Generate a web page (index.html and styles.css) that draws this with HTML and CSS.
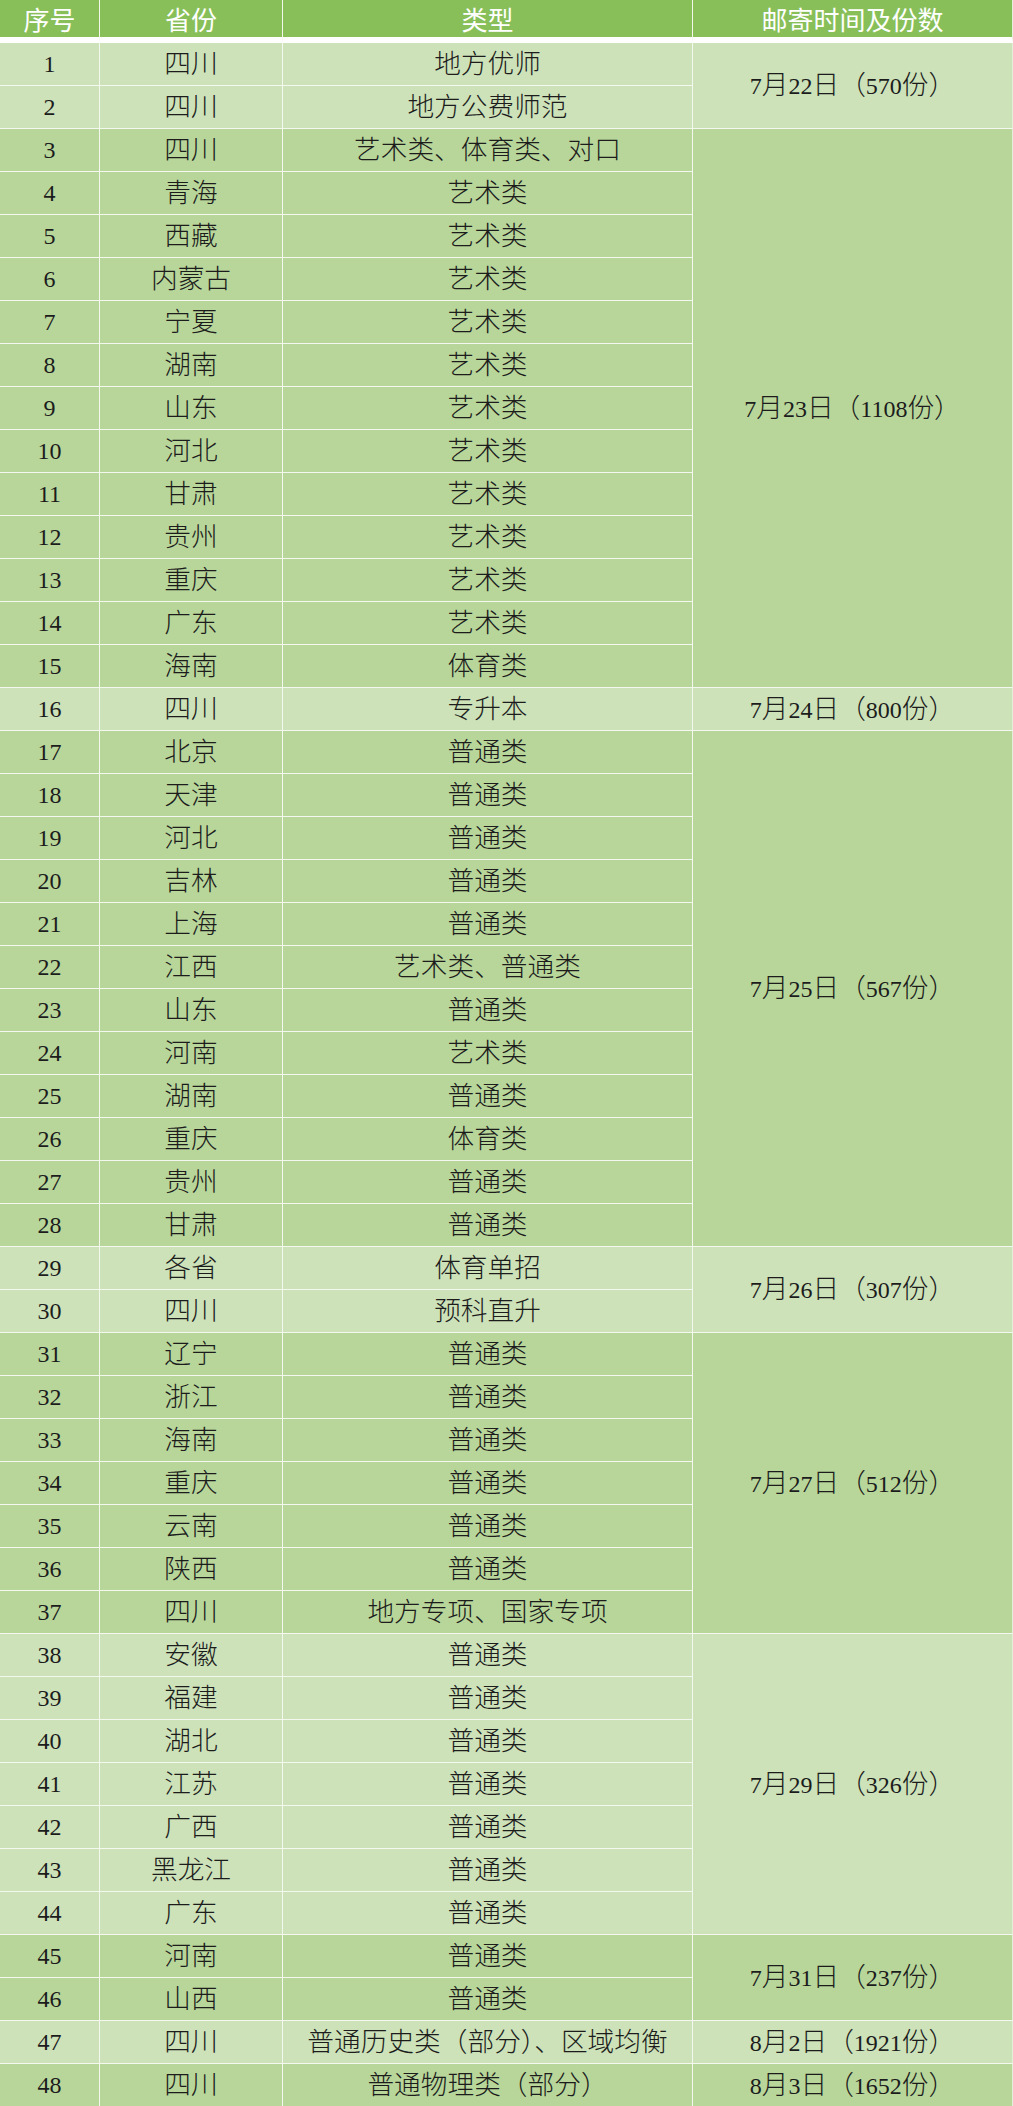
FILE: index.html
```html
<!DOCTYPE html>
<html lang="zh-CN">
<head>
<meta charset="utf-8">
<title>邮寄时间及份数</title>
<link rel="stylesheet" href="styles.css">
</head>
<body>
<table class="mail-table">
  <colgroup>
    <col class="c-no">
    <col class="c-prov">
    <col class="c-type">
    <col class="c-date">
  </colgroup>
  <thead>
    <tr><th>序号</th><th>省份</th><th>类型</th><th>邮寄时间及份数</th></tr>
  </thead>
  <tbody class="light">
    <tr><td class="no">1</td><td>四川</td><td>地方优师</td><td class="date" rowspan="2"><span class="n">7</span>月<span class="n">22</span>日（<span class="n">570</span>份）</td></tr>
    <tr><td class="no">2</td><td>四川</td><td>地方公费师范</td></tr>
  </tbody>
  <tbody class="mid">
    <tr><td class="no">3</td><td>四川</td><td>艺术类、体育类、对口</td><td class="date" rowspan="13"><span class="n">7</span>月<span class="n">23</span>日（<span class="n">1108</span>份）</td></tr>
    <tr><td class="no">4</td><td>青海</td><td>艺术类</td></tr>
    <tr><td class="no">5</td><td>西藏</td><td>艺术类</td></tr>
    <tr><td class="no">6</td><td>内蒙古</td><td>艺术类</td></tr>
    <tr><td class="no">7</td><td>宁夏</td><td>艺术类</td></tr>
    <tr><td class="no">8</td><td>湖南</td><td>艺术类</td></tr>
    <tr><td class="no">9</td><td>山东</td><td>艺术类</td></tr>
    <tr><td class="no">10</td><td>河北</td><td>艺术类</td></tr>
    <tr><td class="no">11</td><td>甘肃</td><td>艺术类</td></tr>
    <tr><td class="no">12</td><td>贵州</td><td>艺术类</td></tr>
    <tr><td class="no">13</td><td>重庆</td><td>艺术类</td></tr>
    <tr><td class="no">14</td><td>广东</td><td>艺术类</td></tr>
    <tr><td class="no">15</td><td>海南</td><td>体育类</td></tr>
  </tbody>
  <tbody class="light">
    <tr><td class="no">16</td><td>四川</td><td>专升本</td><td class="date"><span class="n">7</span>月<span class="n">24</span>日（<span class="n">800</span>份）</td></tr>
  </tbody>
  <tbody class="mid">
    <tr><td class="no">17</td><td>北京</td><td>普通类</td><td class="date" rowspan="12"><span class="n">7</span>月<span class="n">25</span>日（<span class="n">567</span>份）</td></tr>
    <tr><td class="no">18</td><td>天津</td><td>普通类</td></tr>
    <tr><td class="no">19</td><td>河北</td><td>普通类</td></tr>
    <tr><td class="no">20</td><td>吉林</td><td>普通类</td></tr>
    <tr><td class="no">21</td><td>上海</td><td>普通类</td></tr>
    <tr><td class="no">22</td><td>江西</td><td>艺术类、普通类</td></tr>
    <tr><td class="no">23</td><td>山东</td><td>普通类</td></tr>
    <tr><td class="no">24</td><td>河南</td><td>艺术类</td></tr>
    <tr><td class="no">25</td><td>湖南</td><td>普通类</td></tr>
    <tr><td class="no">26</td><td>重庆</td><td>体育类</td></tr>
    <tr><td class="no">27</td><td>贵州</td><td>普通类</td></tr>
    <tr><td class="no">28</td><td>甘肃</td><td>普通类</td></tr>
  </tbody>
  <tbody class="light">
    <tr><td class="no">29</td><td>各省</td><td>体育单招</td><td class="date" rowspan="2"><span class="n">7</span>月<span class="n">26</span>日（<span class="n">307</span>份）</td></tr>
    <tr><td class="no">30</td><td>四川</td><td>预科直升</td></tr>
  </tbody>
  <tbody class="mid">
    <tr><td class="no">31</td><td>辽宁</td><td>普通类</td><td class="date" rowspan="7"><span class="n">7</span>月<span class="n">27</span>日（<span class="n">512</span>份）</td></tr>
    <tr><td class="no">32</td><td>浙江</td><td>普通类</td></tr>
    <tr><td class="no">33</td><td>海南</td><td>普通类</td></tr>
    <tr><td class="no">34</td><td>重庆</td><td>普通类</td></tr>
    <tr><td class="no">35</td><td>云南</td><td>普通类</td></tr>
    <tr><td class="no">36</td><td>陕西</td><td>普通类</td></tr>
    <tr><td class="no">37</td><td>四川</td><td>地方专项、国家专项</td></tr>
  </tbody>
  <tbody class="light">
    <tr><td class="no">38</td><td>安徽</td><td>普通类</td><td class="date" rowspan="7"><span class="n">7</span>月<span class="n">29</span>日（<span class="n">326</span>份）</td></tr>
    <tr><td class="no">39</td><td>福建</td><td>普通类</td></tr>
    <tr><td class="no">40</td><td>湖北</td><td>普通类</td></tr>
    <tr><td class="no">41</td><td>江苏</td><td>普通类</td></tr>
    <tr><td class="no">42</td><td>广西</td><td>普通类</td></tr>
    <tr><td class="no">43</td><td>黑龙江</td><td>普通类</td></tr>
    <tr><td class="no">44</td><td>广东</td><td>普通类</td></tr>
  </tbody>
  <tbody class="mid">
    <tr><td class="no">45</td><td>河南</td><td>普通类</td><td class="date" rowspan="2"><span class="n">7</span>月<span class="n">31</span>日（<span class="n">237</span>份）</td></tr>
    <tr><td class="no">46</td><td>山西</td><td>普通类</td></tr>
  </tbody>
  <tbody class="light">
    <tr><td class="no">47</td><td>四川</td><td>普通历史类（部分）、区域均衡</td><td class="date"><span class="n">8</span>月<span class="n">2</span>日（<span class="n">1921</span>份）</td></tr>
  </tbody>
  <tbody class="mid">
    <tr><td class="no">48</td><td>四川</td><td>普通物理类（部分）</td><td class="date"><span class="n">8</span>月<span class="n">3</span>日（<span class="n">1652</span>份）</td></tr>
  </tbody>
</table>
</body>
</html>
```

FILE: styles.css
```css
html, body {
  margin: 0;
  padding: 0;
  background: #ffffff;
}

.mail-table {
  width: 1013px;
  table-layout: fixed;
  border-collapse: separate;
  border-spacing: 0;
  font-family: "Liberation Serif", "Noto Sans CJK SC", serif;
  color: #1c1c1c;
}

.c-no { width: 100px; }
.c-prov { width: 183px; }
.c-type { width: 410px; }
.c-date { width: 320px; }

.mail-table th {
  height: 37px;
  padding: 0;
  background: #88bf59;
  color: #ffffff;
  font-family: "Noto Sans CJK SC", sans-serif;
  font-weight: 400;
  font-size: 26px;
  line-height: 37px;
  text-align: center;
  vertical-align: middle;
  border-right: 1px solid #f2f8ec;
  border-bottom: 6px solid #ffffff;
  overflow: hidden;
  white-space: nowrap;
}

.mail-table td {
  height: 42px;
  padding: 0;
  font-size: 26.7px;
  font-weight: 300;
  line-height: 28px;
  text-align: center;
  vertical-align: middle;
  border-right: 1px solid #f4f9ef;
  border-bottom: 1px solid #f4f9ef;
  white-space: nowrap;
}

.mail-table td.no {
  font-size: 24px;
}

.mail-table td.date .n {
  font-size: 24px;
}

.mail-table th:last-child,
.mail-table td.date {
  border-right: 1px solid #e4efd9;
}

.light td {
  background: #cde2b9;
}

.mid td {
  background: #b8d69a;
}
```
